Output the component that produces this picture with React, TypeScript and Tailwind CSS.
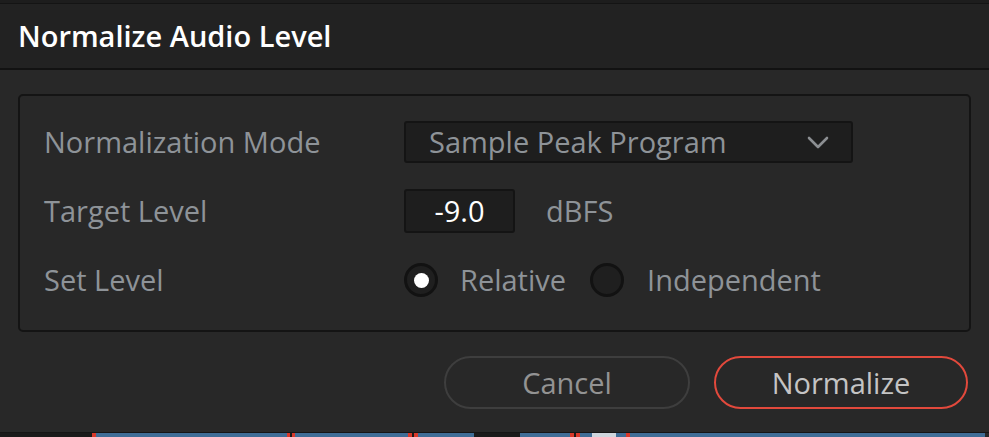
import React from "react";

const font = { fontFamily: '"Open Sans", "Noto Sans", sans-serif' };

function Chevron() {
	return (
		<svg width="22" height="13" viewBox="0 0 22 13" fill="none">
			<path
				d="M2 2 L11 11 L20 2"
				stroke="#8c8f92"
				strokeWidth="2.6"
				strokeLinecap="round"
				strokeLinejoin="round"
			/>
		</svg>
	);
}

function Radio({ checked }: { checked?: boolean }) {
	return (
		<span className="flex h-[34px] w-[34px] items-center justify-center rounded-full border-[3px] border-[#121212] bg-[#1f1f1f]">
			{checked && <span className="h-[15px] w-[15px] rounded-full bg-white" />}
		</span>
	);
}

// timeline clips peeking out under the dialog
const clips: { w: number; c: string }[] = [
	{ w: 92, c: "bg-[#1a1a1a]" },
	{ w: 4, c: "bg-[#d8392b]" },
	{ w: 191, c: "bg-[#3f6d96]" },
	{ w: 3, c: "bg-[#d8392b]" },
	{ w: 2, c: "bg-[#1a1a1a]" },
	{ w: 3, c: "bg-[#d8392b]" },
	{ w: 113, c: "bg-[#3f6d96]" },
	{ w: 4, c: "bg-[#d8392b]" },
	{ w: 2, c: "bg-[#1a1a1a]" },
	{ w: 4, c: "bg-[#d8392b]" },
	{ w: 56, c: "bg-[#3f6d96]" },
	{ w: 46, c: "bg-[#1a1a1a]" },
	{ w: 50, c: "bg-[#3f6d96]" },
	{ w: 4, c: "bg-[#d8392b]" },
	{ w: 2, c: "bg-[#1a1a1a]" },
	{ w: 4, c: "bg-[#d8392b]" },
	{ w: 12, c: "bg-[#3f6d96]" },
	{ w: 24, c: "bg-[#cfd6dd]" },
	{ w: 10, c: "bg-[#3f6d96]" },
	{ w: 4, c: "bg-[#d8392b]" },
	{ w: 355, c: "bg-[#3f6d96]" },
];

export default function App() {
	return (
		<div
			className="flex h-[437px] w-[989px] flex-col overflow-hidden bg-[#282828]"
			style={font}
		>
			<div className="h-[4px] border-b border-[#141414] bg-[#1d1d1d]" />
			<div className="flex h-[66px] items-center border-b-2 border-[#121212] bg-[#222222] px-[18px]">
				<h1 className="text-[29px] font-semibold text-white">
					Normalize Audio Level
				</h1>
			</div>

			<div className="flex flex-1 flex-col px-[18px] pt-[24px]">
				<div className="flex h-[238px] flex-col rounded-[5px] border-2 border-[#141414] bg-[#282828] pl-[24px] pr-[24px] pt-[25px]">
					<div className="flex h-[42px] items-center">
						<span className="w-[360px] text-[29px] text-[#8e9398]">
							Normalization Mode
						</span>
						<div className="flex h-[42px] w-[449px] items-center justify-between rounded-[3px] border-2 border-[#141414] bg-[#1e1e1e] pl-[23px] pr-[22px]">
							<span className="text-[29px] text-[#8e9398]">
								Sample Peak Program
							</span>
							<Chevron />
						</div>
					</div>

					<div className="mt-[26px] flex h-[44px] items-center">
						<span className="w-[360px] text-[29px] text-[#8e9398]">
							Target Level
						</span>
						<div className="flex h-[44px] w-[111px] items-center justify-center rounded-[3px] border-2 border-[#141414] bg-[#1e1e1e]">
							<span className="text-[29px] text-white">-9.0</span>
						</div>
						<span className="ml-[31px] text-[29px] text-[#8e9398]">dBFS</span>
					</div>

					<div className="mt-[30px] flex h-[34px] items-center">
						<span className="w-[360px] text-[29px] text-[#8e9398]">
							Set Level
						</span>
						<Radio checked />
						<span className="ml-[22px] text-[29px] text-[#8e9398]">
							Relative
						</span>
						<span className="ml-[24px]">
							<Radio />
						</span>
						<span className="ml-[23px] text-[29px] text-[#8e9398]">
							Independent
						</span>
					</div>
				</div>

				<div className="mt-[24px] flex justify-end gap-[24px] pr-[3px]">
					<button className="flex h-[53px] w-[246px] items-center justify-center rounded-full border-2 border-[#3e3e3e] text-[29px] text-[#939393]">
						Cancel
					</button>
					<button className="flex h-[53px] w-[254px] items-center justify-center rounded-full border-2 border-[#e2493c] text-[29px] text-[#c4c4c4]">
						Normalize
					</button>
				</div>
			</div>

			<div className="mt-auto flex h-[5px] border-t border-[#151515]">
				{clips.map((clip, i) => (
					<div key={i} className={clip.c} style={{ width: clip.w }} />
				))}
			</div>
		</div>
	);
}
